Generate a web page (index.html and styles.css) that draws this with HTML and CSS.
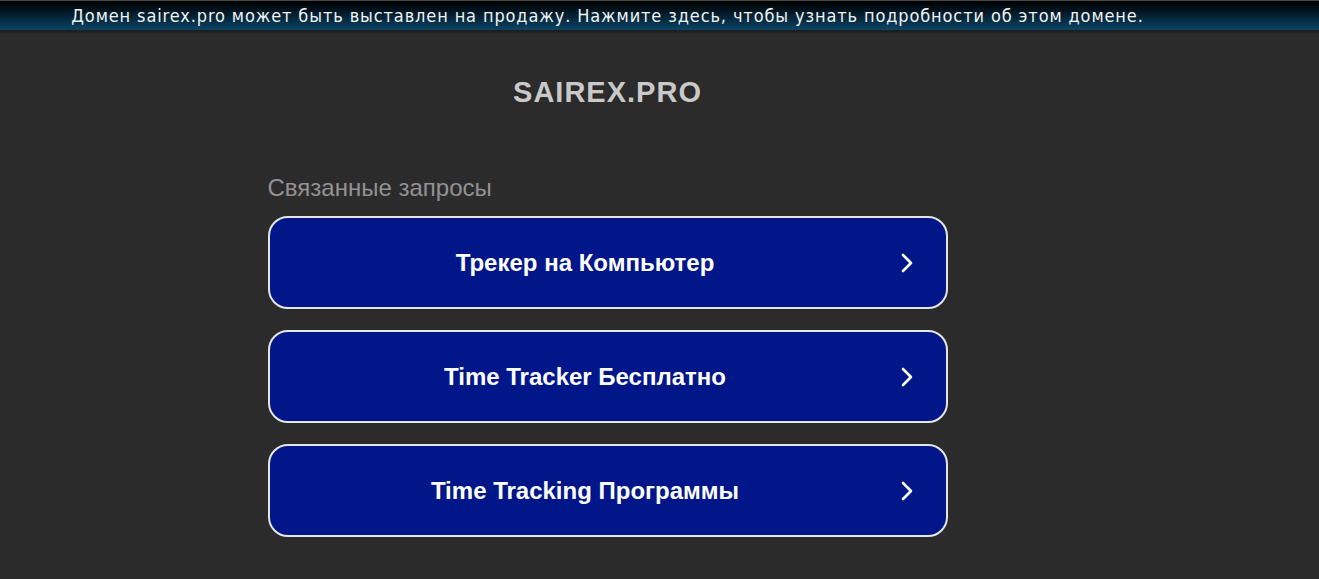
FILE: index.html
```html
<!DOCTYPE html>
<html lang="ru">
<head>
<meta charset="utf-8">
<title>sairex.pro</title>
<link rel="stylesheet" href="styles.css">
</head>
<body>
<div class="banner"><span class="banner-text">Домен sairex.pro может быть выставлен на продажу. Нажмите здесь, чтобы узнать подробности об этом домене.</span></div>
<main class="page">
  <h1 class="title">SAIREX.PRO</h1>
  <section class="related">
    <h2 class="related-head">Связанные запросы</h2>
    <a class="link" href="#"><span class="link-text">Трекер на Компьютер</span><svg class="chev" viewBox="0 0 12 20" width="12" height="20"><path d="M2 2 L10 10 L2 18" fill="none" stroke="#fff" stroke-width="2.6" stroke-linecap="round" stroke-linejoin="round"/></svg></a>
    <a class="link" href="#"><span class="link-text">Time Tracker Бесплатно</span><svg class="chev" viewBox="0 0 12 20" width="12" height="20"><path d="M2 2 L10 10 L2 18" fill="none" stroke="#fff" stroke-width="2.6" stroke-linecap="round" stroke-linejoin="round"/></svg></a>
    <a class="link" href="#"><span class="link-text">Time Tracking Программы</span><svg class="chev" viewBox="0 0 12 20" width="12" height="20"><path d="M2 2 L10 10 L2 18" fill="none" stroke="#fff" stroke-width="2.6" stroke-linecap="round" stroke-linejoin="round"/></svg></a>
  </section>
</main>
</body>
</html>
```
FILE: styles.css
```css
html, body {
  margin: 0;
  padding: 0;
}
body {
  background: #2b2b2b;
  font-family: "Liberation Sans", Arial, sans-serif;
  height: 579px;
  overflow: hidden;
}
.banner {
  height: 29px;
  border-top: 1px solid #4a4a4a;
  background: linear-gradient(to bottom, #000000 0%, #021622 35%, #0a4466 100%);
  box-shadow: 0 2px 0 #1e1e1e, 0 3px 1px #232323;
  display: flex;
  justify-content: center;
  align-items: center;
  padding-right: 104px;
}
.banner-text {
  color: #f2f2f2;
  font-family: "Liberation Sans Narrow", "DejaVu Sans Condensed", "Roboto Condensed", sans-serif;
  font-size: 18px;
  letter-spacing: 0.88px;
  white-space: nowrap;
  margin-top: -1px;
}
.page {
  width: 1215px;
  display: flex;
  flex-direction: column;
  align-items: center;
}
.title {
  margin: 45px 0 0;
  font-size: 29px;
  letter-spacing: 1px;
  font-weight: bold;
  color: #c9c9c9;
  line-height: 34px;
}
.related {
  width: 680px;
  margin-top: 65px;
  display: flex;
  flex-direction: column;
  gap: 21px;
}
.related-head {
  margin: 0 0 -7px;
  font-size: 24px;
  font-weight: normal;
  color: #929292;
  line-height: 28px;
}
.link {
  box-sizing: border-box;
  height: 93px;
  border: 2px solid #e6e6e6;
  border-radius: 20px;
  background: #011689;
  display: flex;
  align-items: center;
  text-decoration: none;
}
.link-text {
  flex: 1;
  text-align: center;
  color: #ffffff;
  font-weight: bold;
  font-size: 24px;
  padding-left: 2px;
}
.chev {
  margin: 0 33px 0 2px;
  flex: none;
}
```
